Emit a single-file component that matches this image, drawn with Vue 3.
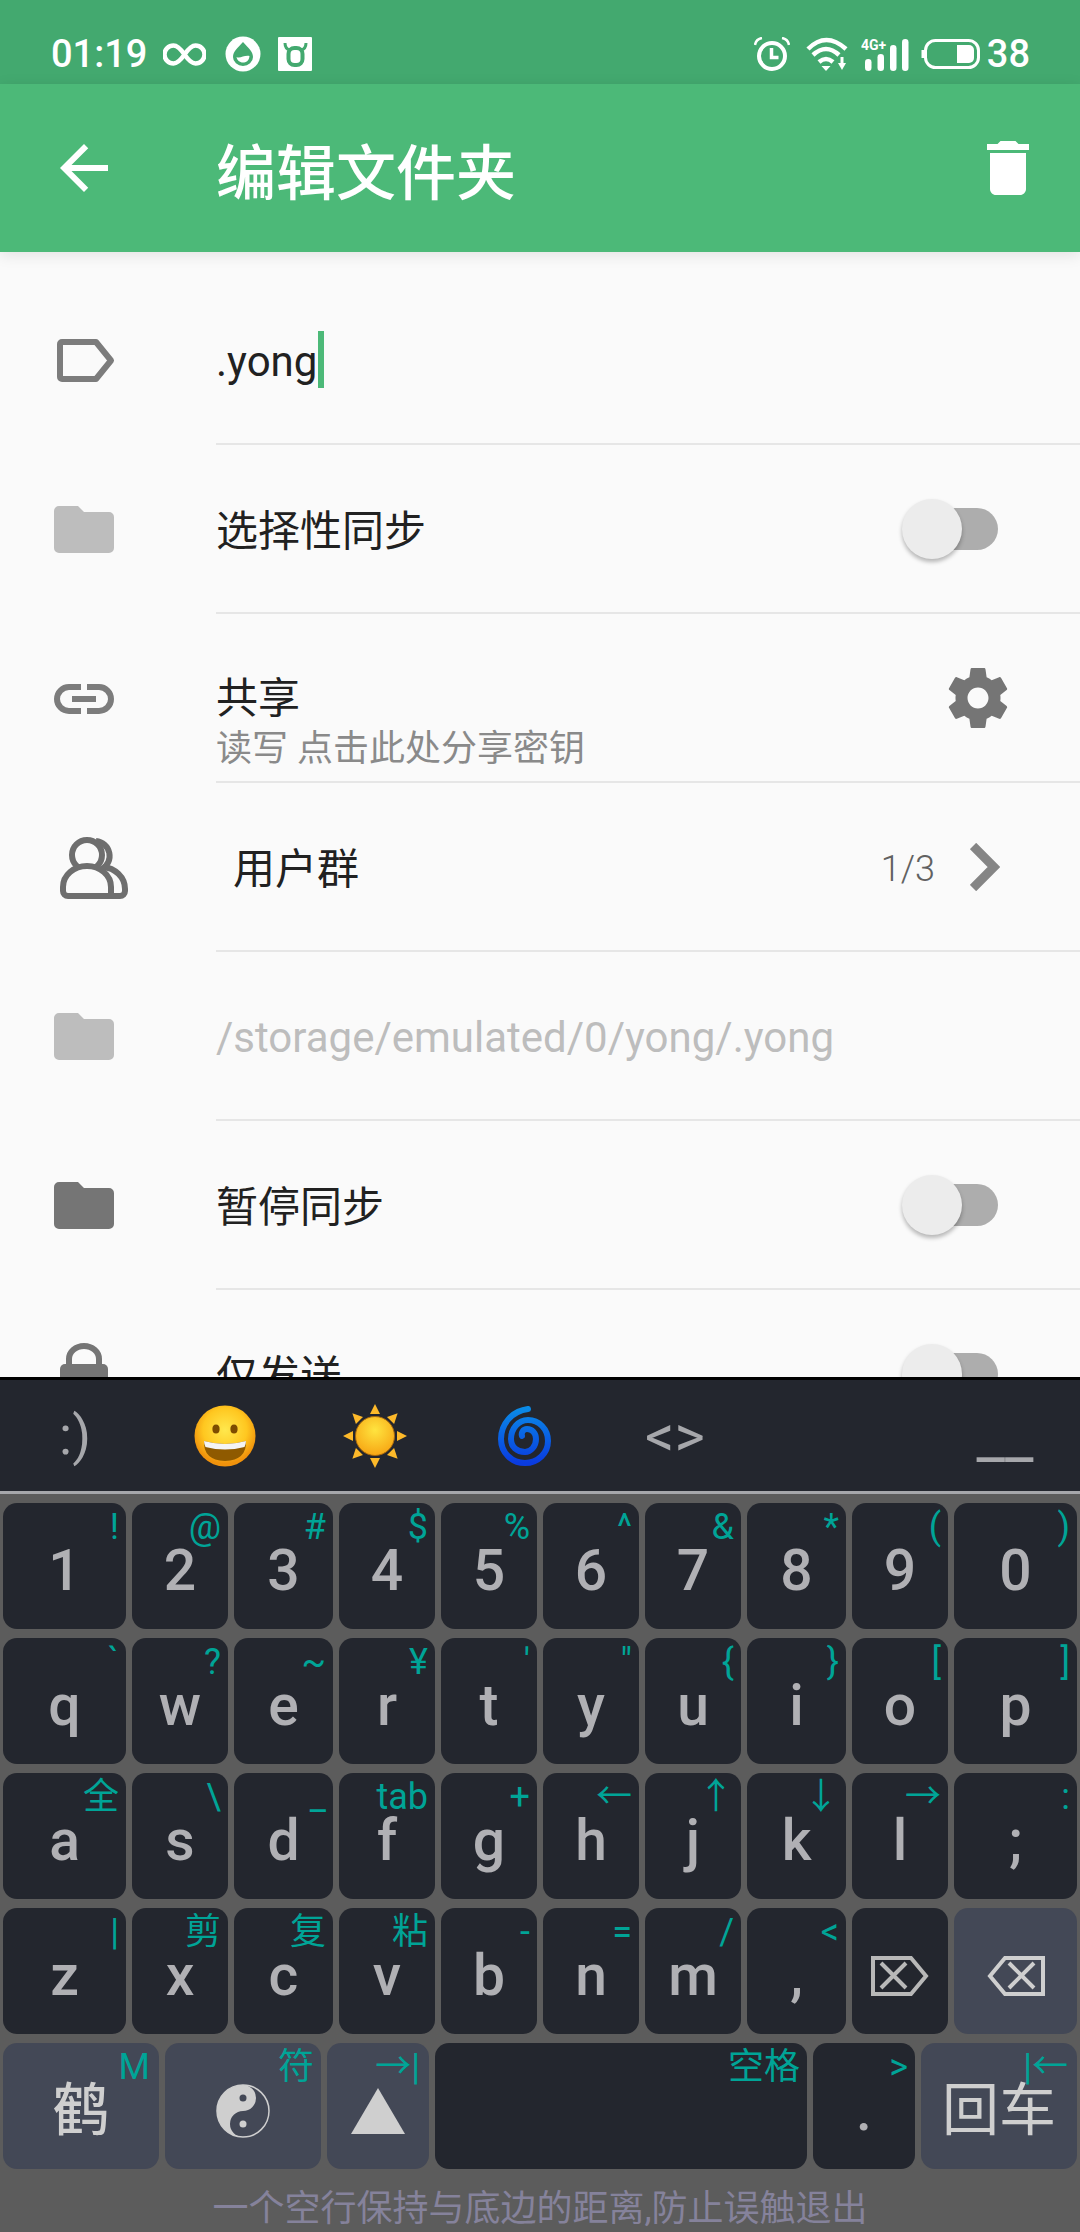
<script setup>
const widths = [123, 96, 99, 96, 96, 96, 96, 99, 96, 123]

const rows = [
  [['1', '!'], ['2', '@'], ['3', '#'], ['4', '$'], ['5', '%'], ['6', '^'], ['7', '&'], ['8', '*'], ['9', '('], ['0', ')']],
  [['q', '`'], ['w', '?'], ['e', '~'], ['r', '¥'], ['t', "'"], ['y', '"'], ['u', '{'], ['i', '}'], ['o', '['], ['p', ']']],
  [['a', '全'], ['s', '\\'], ['d', '_'], ['f', 'tab'], ['g', '+'], ['h', '←'], ['j', '↑'], ['k', '↓'], ['l', '→'], [';', ':']],
  [['z', '|'], ['x', '剪'], ['c', '复'], ['v', '粘'], ['b', '-'], ['n', '='], ['m', '/'], [',', '<'], ['', ''], ['', '']],
]

const sunRays = [0, 45, 90, 135, 180, 225, 270, 315]
</script>

<template>
  <div class="app">
    <div class="status">
      <span class="st-text">01:19</span>
      <svg class="st-inf" width="43" height="23" viewBox="0 0 43 23"><path d="M21.5 11.5C17 5 14 2.500 10.500 2.500a9 9 0 0 0 0 18c3.500 0 6.500-2.500 11-9s7.500-9 11-9a9 9 0 0 1 0 18c-3.500 0-6.500-2.500-11-9z" fill="none" stroke="#fff" stroke-width="4.500"/></svg>
      <svg class="st-drop" width="36" height="36" viewBox="0 0 36 36"><circle cx="18" cy="18" r="17.500" fill="#fff"/><path d="M18 6C13 12 8 15 8 21a10 9 0 0 0 20 0C28 15 23 12 18 6z" fill="#43a96f"/><path d="M11.500 21C15 23 19 19 24.500 20C24 25 21 26.500 18 26.500C14.500 26.500 12 24 11.500 21z" fill="#fff"/></svg>
      <svg class="st-cow" width="34" height="34" viewBox="0 0 34 34"><rect width="34" height="34" rx="1" fill="#fff"/><rect x="10.500" y="11" width="14" height="17" rx="6" fill="#fff" stroke="#43a96f" stroke-width="4"/><path d="M7 6q0 6 5 7M28 6q0 6-5 7" fill="none" stroke="#43a96f" stroke-width="3"/></svg>
      <span class="st-gap"></span>
      <svg width="36" height="34" viewBox="0 0 36 34"><circle cx="18" cy="19" r="13" fill="none" stroke="#fff" stroke-width="4"/><path d="M17.500 11v9.500h7" fill="none" stroke="#fff" stroke-width="3.500"/><path d="M1 8Q2 2 8 1M35 8Q34 2 28 1" fill="none" stroke="#fff" stroke-width="2.500"/></svg>
      <svg class="st-wifi" width="42" height="34" viewBox="0 0 42 34"><g fill="none" stroke="#fff" stroke-width="4.500"><path d="M2 12Q20-6 40 12"/><path d="M7 18Q20 6 33 18"/><path d="M13 25Q20 19 27 25"/></g><path d="M15.500 29h9L20 34z" fill="#fff"/><path d="M36 20v7" stroke="#fff" stroke-width="3"/><path d="M32 26h8l-4 7z" fill="#fff"/></svg>
      <svg class="st-sig" width="48" height="34" viewBox="0 0 48 34"><text x="0" y="13" class="st-4g">4G+</text><g fill="#fff"><rect x="4" y="22" width="6.500" height="12" rx="3.250"/><rect x="16.500" y="17" width="6.500" height="17" rx="3.250"/><rect x="29" y="8" width="6.500" height="26" rx="3.250"/><rect x="41" y="2" width="6.500" height="32" rx="3.250"/></g></svg>
      <svg class="st-bat" width="60" height="30" viewBox="0 0 60 30"><path d="M3 11v8" stroke="#fff" stroke-width="3"/><rect x="5.500" y="1.500" width="53" height="27" rx="10" fill="none" stroke="#fff" stroke-width="3"/><path d="M37 6h12a5 5 0 0 1 5 5v8a5 5 0 0 1-5 5H37z" fill="#fff"/></svg>
      <span class="st-text st-level">38</span>
    </div>

    <header class="appbar">
      <svg class="back" width="72" height="72" viewBox="0 0 24 24"><path d="M20 11H7.830l5.590-5.590L12 4l-8 8 8 8 1.410-1.410L7.830 13H20v-2z" fill="#fff"/></svg>
      <h1 class="title">编辑文件夹</h1>
      <svg class="trash" width="72" height="72" viewBox="0 0 24 24"><path d="M6 19c0 1.100.9 2 2 2h8c1.100 0 2-.9 2-2V7H6v12zM19 4h-3.500l-1-1h-5l-1 1H5v2h14V4z" fill="#fff"/></svg>
    </header>

    <main class="list">
      <div class="row">
        <div class="slot">
          <svg class="ic-tag" width="58" height="43" viewBox="0 0 58 43"><path d="M5 3h34l15 18.500L39 40H5a2 2 0 0 1-2-2V5a2 2 0 0 1 2-2z" fill="none" stroke="#7c7c7c" stroke-width="6" stroke-linejoin="round"/></svg>
        </div>
        <div class="body"><span class="txt latin">.yong</span><span class="caret"></span></div>
      </div>

      <div class="row">
        <div class="slot">
          <svg width="60" height="47" viewBox="0 0 60 47"><path d="M5 0h19l6 6h25a5 5 0 0 1 5 5v31a5 5 0 0 1-5 5H5a5 5 0 0 1-5-5V5a5 5 0 0 1 5-5z" fill="#bdbdbd"/></svg>
        </div>
        <div class="body">
          <span class="txt">选择性同步</span>
          <div class="switch"><span class="thumb"></span></div>
        </div>
      </div>

      <div class="row">
        <div class="slot">
          <svg width="60" height="30" viewBox="0 0 60 30"><path d="M27 3H15a12 12 0 0 0 0 24h12M33 3h12a12 12 0 0 1 0 24H33M18 15h24" fill="none" stroke="#7c7c7c" stroke-width="6"/></svg>
        </div>
        <div class="body body-two">
          <div class="two">
            <div class="txt line">共享</div>
            <div class="sub line">读写 点击此处分享密钥</div>
          </div>
          <svg class="gear" width="72" height="72" viewBox="0 0 24 24"><path d="M19.430 12.980c.04-.32.07-.64.07-.98s-.03-.66-.07-.98l2.110-1.650c.19-.15.24-.42.12-.64l-2-3.460c-.12-.22-.39-.3-.61-.22l-2.490 1c-.52-.4-1.080-.73-1.690-.98l-.38-2.650C14.460 2.180 14.250 2 14 2h-4c-.25 0-.46.18-.49.42l-.38 2.650c-.61.25-1.170.59-1.690.98l-2.490-1c-.23-.09-.49 0-.61.22l-2 3.460c-.13.22-.07.49.12.64l2.110 1.650c-.04.32-.07.65-.07.98s.03.66.07.98l-2.110 1.650c-.19.15-.24.42-.12.64l2 3.460c.12.22.39.3.61.22l2.490-1c.52.4 1.080.73 1.690.98l.38 2.650c.03.24.24.42.49.42h4c.25 0 .46-.18.49-.42l.38-2.650c.61-.25 1.170-.59 1.690-.98l2.490 1c.23.09.49 0 .61-.22l2-3.460c.12-.22.07-.49-.12-.64l-2.110-1.650zM12 15.500c-1.930 0-3.500-1.570-3.500-3.500s1.570-3.500 3.500-3.500 3.500 1.570 3.500 3.500-1.570 3.500-3.500 3.500z" fill="#757575"/></svg>
        </div>
      </div>

      <div class="row">
        <div class="slot">
          <svg class="ic-users" width="68" height="62" viewBox="0 0 68 62"><g fill="none" stroke="#6e6e6e" stroke-width="6"><path d="M36 4a15 15 0 0 1 6 28"/><path d="M43 30c12 1 22 10 22 22v2a5 5 0 0 1-5 5H30"/><circle cx="27" cy="18" r="15" fill="#fafafa"/><path d="M3 50c0-12 11-21 24-21s24 9 24 21v9H8a5 5 0 0 1-5-5z" fill="#fafafa"/></g></svg>
        </div>
        <div class="body">
          <span class="txt indent">用户群</span>
          <span class="count latin">1/3</span>
          <svg class="chev" width="30" height="48" viewBox="0 0 30 48"><path d="M3 3l21 21L3 45" fill="none" stroke="#858585" stroke-width="9"/></svg>
        </div>
      </div>

      <div class="row">
        <div class="slot">
          <svg width="60" height="47" viewBox="0 0 60 47"><path d="M5 0h19l6 6h25a5 5 0 0 1 5 5v31a5 5 0 0 1-5 5H5a5 5 0 0 1-5-5V5a5 5 0 0 1 5-5z" fill="#bdbdbd"/></svg>
        </div>
        <div class="body"><span class="txt path latin">/storage/emulated/0/yong/.yong</span></div>
      </div>

      <div class="row">
        <div class="slot">
          <svg width="60" height="47" viewBox="0 0 60 47"><path d="M5 0h19l6 6h25a5 5 0 0 1 5 5v31a5 5 0 0 1-5 5H5a5 5 0 0 1-5-5V5a5 5 0 0 1 5-5z" fill="#757575"/></svg>
        </div>
        <div class="body">
          <span class="txt">暂停同步</span>
          <div class="switch"><span class="thumb"></span></div>
        </div>
      </div>

      <div class="row">
        <div class="slot">
          <svg class="ic-lock" width="48" height="64" viewBox="0 0 48 64"><path d="M9 24V16a15 13 0 0 1 30 0v8" fill="none" stroke="#757575" stroke-width="6"/><rect y="21" width="48" height="43" rx="5" fill="#757575"/></svg>
        </div>
        <div class="body">
          <span class="txt">仅发送</span>
          <div class="switch"><span class="thumb"></span></div>
        </div>
      </div>
    </main>

    <section class="kb">
      <div class="cands">
        <span class="cand smile-txt">:)</span>
        <span class="cand">
          <svg width="62" height="62" viewBox="0 0 62 62">
            <defs>
              <radialGradient id="face" cx="50%" cy="40%" r="55%"><stop offset="0" stop-color="#ffe84d"/><stop offset=".65" stop-color="#ffc720"/><stop offset="1" stop-color="#f0920c"/></radialGradient>
            </defs>
            <circle cx="31" cy="31" r="30.500" fill="url(#face)"/>
            <ellipse cx="22" cy="24" rx="3.600" ry="4.500" fill="#7d4c00"/>
            <ellipse cx="40" cy="24" rx="3.600" ry="4.500" fill="#7d4c00"/>
            <path d="M10 36q21 6 42 0q1 19-21 20Q9 55 10 36z" fill="#8f5a00"/>
            <path d="M10 36q21 6 42 0q0 3-1.500 6q-19.500 5-39 0Q10 39 10 36z" fill="#f4f4f4"/>
          </svg>
        </span>
        <span class="cand">
          <svg width="64" height="64" viewBox="0 0 64 64">
            <defs>
              <radialGradient id="sun" cx="50%" cy="35%" r="65%"><stop offset="0" stop-color="#ffe43f"/><stop offset="1" stop-color="#f7a614"/></radialGradient>
            </defs>
            <polygon v-for="a in sunRays" :key="a" points="32,0 27,10 37,10" fill="#fdb92a" :transform="`rotate(${a} 32 32)`"/>
            <circle cx="32" cy="32" r="19.500" fill="url(#sun)" stroke="#a8690c" stroke-width="1"/>
          </svg>
        </span>
        <span class="cand">
          <svg width="54" height="60" viewBox="0 0 54 60">
            <defs>
              <linearGradient id="spiral" x1="0" y1="0" x2="0" y2="1"><stop offset="0" stop-color="#0a8ae6"/><stop offset="1" stop-color="#0a3be0"/></linearGradient>
            </defs>
            <path d="M30 3C14 5 3 18 3 33C3 47 14 57 27 57C40 57 50 47 50 35C50 23 41 14 30 14C20 14 13 23 13 33C13 41 19 46 27 46C33 46 38 40 38 33C38 27 34 23 29 23C25 23 23 27 24 30" fill="none" stroke="url(#spiral)" stroke-width="6" stroke-linecap="round"/>
          </svg>
        </span>
        <span class="cand angle-txt">&lt;&gt;</span>
        <span class="cand under">__</span>
      </div>

      <div class="keys">
        <div v-for="(row, r) in rows" :key="r" class="krow">
          <div v-for="(k, i) in row" :key="i" :class="['key', 'w' + widths[i], { mod: r === 3 && i === 9, ikey: r === 3 && i >= 8 }]">
            <template v-if="r === 3 && i === 8">
              <svg width="58" height="40" viewBox="0 0 58 40"><path d="M2 2h38l15 18-15 18H2z" fill="none" stroke="#b8b8b8" stroke-width="4"/><path d="M10 7l25 25M35 7L10 32" stroke="#b8b8b8" stroke-width="4"/></svg>
            </template>
            <template v-else-if="r === 3 && i === 9">
              <svg width="58" height="40" viewBox="0 0 58 40"><path d="M56 2H18L3 20l15 18h38z" fill="none" stroke="#cfcfcf" stroke-width="4"/><path d="M22 7l25 25M47 7L22 32" stroke="#cfcfcf" stroke-width="4"/></svg>
            </template>
            <template v-else>{{ k[0] }}</template>
            <span v-if="k[1]" class="hint">{{ k[1] }}</span>
          </div>
        </div>

        <div class="krow">
          <div class="key mod w156 cjk">鹤<span class="hint hint-wide">M</span></div>
          <div class="key mod w156 ikey">
            <svg width="54" height="54" viewBox="0 0 54 54"><circle cx="27" cy="27" r="26" fill="none" stroke="#cfcfcf" stroke-width="1.500"/><path d="M27 1A26 26 0 0 0 27 53A13 13 0 0 1 27 27A13 13 0 0 0 27 1z" fill="#cfcfcf"/><circle cx="27" cy="14" r="3.500" fill="#434856"/><circle cx="27" cy="40" r="3.500" fill="#cfcfcf"/></svg>
            <span class="hint">符</span>
          </div>
          <div class="key mod w102 ikey">
            <svg width="54" height="46" viewBox="0 0 54 46"><polygon points="27,0 54,46 0,46" fill="#cfcfcf"/></svg>
            <span class="hint hint-wide">→|</span>
          </div>
          <div class="key w372"><span class="hint">空格</span></div>
          <div class="key w102">.<span class="hint">&gt;</span></div>
          <div class="key mod w156 cjk enter">回车<span class="hint hint-wide">|←</span></div>
        </div>
      </div>

      <div class="tip">一个空行保持与底边的距离,防止误触退出</div>
    </section>
  </div>
</template>

<style scoped>
.app {
  width: 1080px;
  height: 2232px;
  display: flex;
  flex-direction: column;
  overflow: hidden;
  background: #fafafa;
  font-family: Roboto, "Noto Sans CJK SC", sans-serif;
}

/* status bar */
.status {
  height: 84px;
  box-sizing: border-box;
  padding: 24px 50px 0 51px;
  display: flex;
  align-items: center;
  background: #43a96f;
  color: #fff;
  flex: none;
}
.st-text { font-size: 38px; font-weight: 500; line-height: 60px; }
.st-inf { margin-left: 16px; }
.st-drop { margin-left: 19px; }
.st-cow { margin-left: 17px; }
.st-gap { flex: 1; }
.st-wifi { margin-left: 16px; }
.st-sig { margin-left: 13px; }
.st-bat { margin-left: 11px; }
.st-level { margin-left: 7px; }
.st-4g { font-size: 14px; font-weight: 700; fill: #fff; }

/* app bar */
.appbar {
  height: 168px;
  display: flex;
  align-items: center;
  background: #4cb978;
  box-shadow: 0 3px 14px rgba(0, 0, 0, 0.1);
  flex: none;
  position: relative;
  z-index: 1;
}
.back { margin-left: 48px; }
.title { margin: 0 0 0 96px; flex: 1; font-size: 60px; font-weight: 500; color: #fff; }
.trash { margin-right: 36px; }

/* settings rows */
.list {
  flex: 1;
  min-height: 0;
  overflow: hidden;
  padding-top: 24px;
}
.row { height: 169px; display: flex; }
.slot {
  width: 216px;
  box-sizing: border-box;
  padding-left: 54px;
  display: flex;
  align-items: center;
  flex: none;
}
.ic-tag { margin-left: 3px; }
.ic-users { margin-left: 6px; }
.ic-lock { margin-left: 6px; }
.body {
  flex: 1;
  box-sizing: border-box;
  padding-right: 82px;
  display: flex;
  align-items: center;
  border-bottom: 2px solid #e6e6e6;
}
.txt { font-size: 42px; color: #212121; margin-bottom: 2px; }
.latin { padding-top: 5px; }
.caret { width: 6px; height: 57px; background: #4cb978; margin-left: 1px; }
.indent { margin-left: 17px; }
.path { color: #bdbdbd; }
.two { flex: 1; align-self: flex-start; padding-top: 60px; }
.line { line-height: 50px; margin-bottom: 0; }
.sub { font-size: 36px; color: #8a8a8a; }
.gear { margin-right: -16px; }
.count { margin-left: auto; font-size: 36px; font-weight: 300; color: #616161; }
.chev { margin: 0 -2px 0 35px; }
.switch {
  margin-left: auto;
  width: 84px;
  height: 42px;
  border-radius: 21px;
  background: #adadad;
  display: flex;
  align-items: center;
}
.thumb {
  width: 60px;
  height: 60px;
  margin-left: -12px;
  border-radius: 50%;
  background: #ececec;
  box-shadow: 0 3px 4px rgba(0, 0, 0, 0.28);
}

/* keyboard */
.kb {
  flex: none;
  height: 855px;
  box-sizing: border-box;
  display: flex;
  flex-direction: column;
  background: #5c5c5c;
  border-top: 3px solid #000;
  position: relative;
  z-index: 2;
}
.cands {
  height: 114px;
  box-sizing: border-box;
  display: flex;
  align-items: center;
  background: #23262e;
  border-bottom: 3px solid #a6a7ab;
  color: #a6a7ab;
  flex: none;
}
.cand {
  width: 150px;
  display: flex;
  justify-content: center;
  align-items: center;
}
.smile-txt { font-size: 54px; }
.angle-txt { font-size: 58px; }
.under { margin-left: auto; font-size: 63px; line-height: 63px; }
.keys {
  padding: 9px 3px 0;
  display: flex;
  flex-direction: column;
  gap: 9px;
}
.krow { display: flex; gap: 6px; }
.key {
  position: relative;
  height: 126px;
  box-sizing: border-box;
  padding-top: 9px;
  border-radius: 14px;
  background: #23262e;
  color: #b0b0b4;
  font-size: 57px;
  font-weight: 500;
  line-height: 117px;
  text-align: center;
  flex: none;
}
.mod { background: #434856; }
.cjk { font-weight: 500; color: #cfcfcf; }
.enter { font-weight: 400; }
.ikey { display: flex; align-items: center; justify-content: center; }
.w96 { width: 96px; }
.w99 { width: 99px; }
.w102 { width: 102px; }
.w123 { width: 123px; }
.w156 { width: 156px; }
.w372 { width: 372px; }
.hint {
  position: absolute;
  top: 6px;
  right: 7px;
  font-size: 36px;
  font-weight: 400;
  line-height: 36px;
  color: #00a497;
}
.hint-wide { right: 9px; }
.tip {
  flex: 1;
  padding-top: 17px;
  font-size: 36px;
  line-height: 46px;
  text-align: center;
  color: #85829b;
}
</style>
